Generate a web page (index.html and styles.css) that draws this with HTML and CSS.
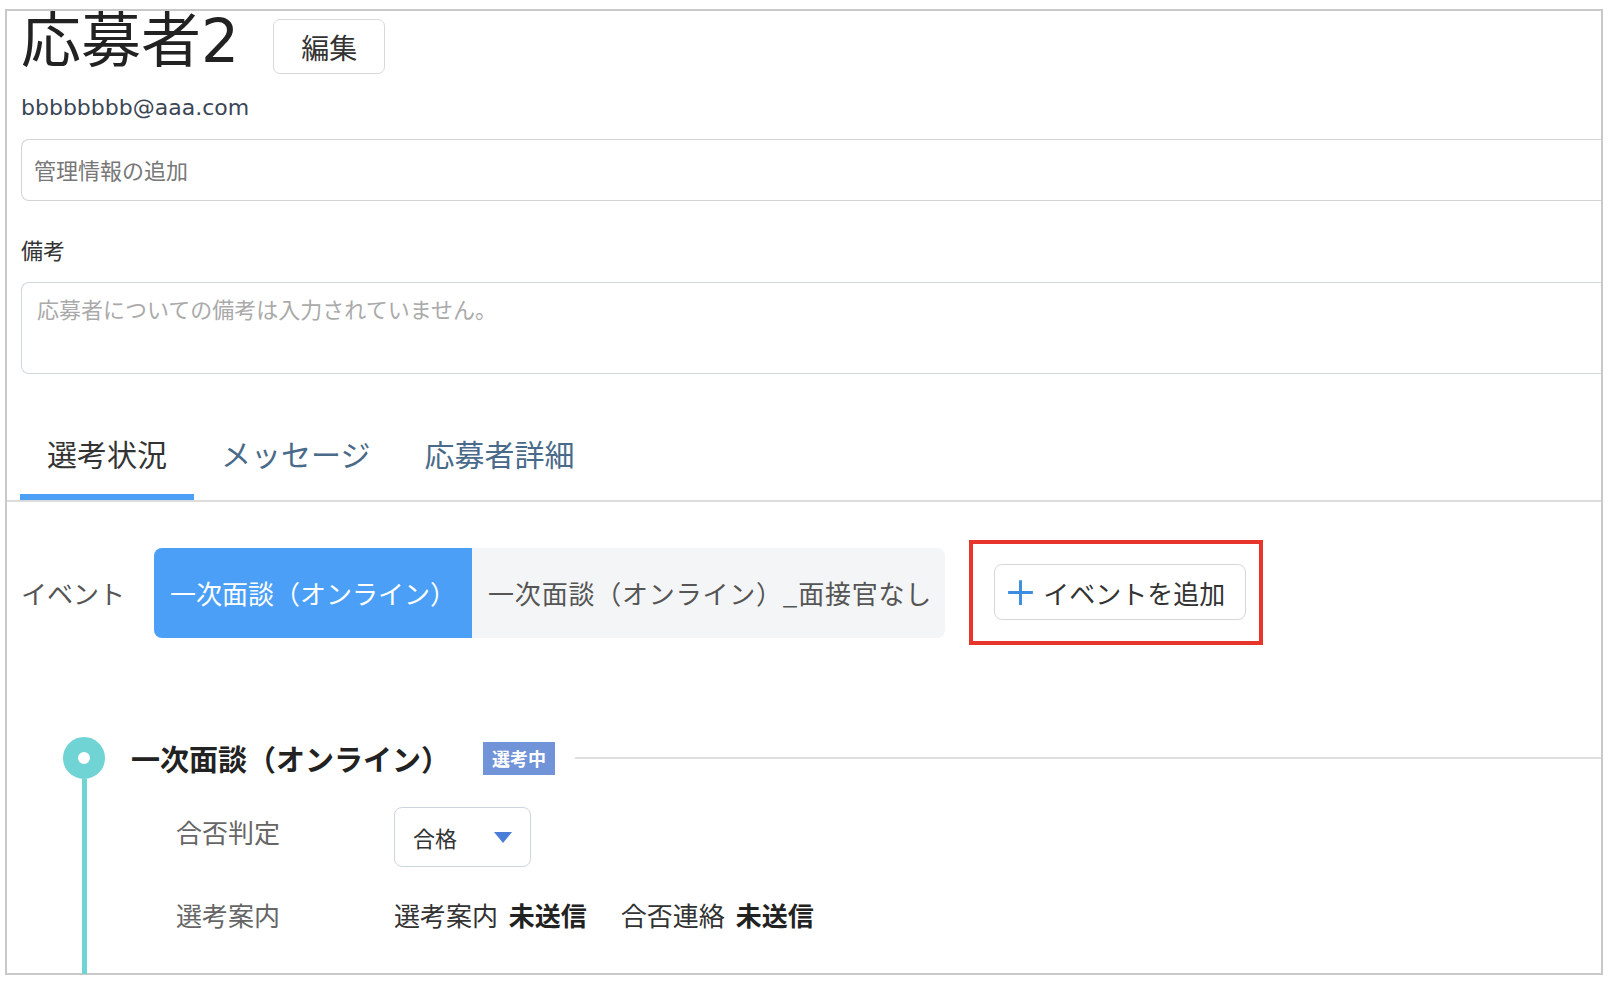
FILE: index.html
```html
<!DOCTYPE html>
<html lang="ja">
<head>
    <meta charset="UTF-8">
    <meta name="viewport" content="width=device-width, initial-scale=1.0">
    <title>応募者2</title>
    <link rel="stylesheet" href="styles.css">
</head>
<body>
    <div class="frame">
        <header class="applicant-head">
            <div class="title-row">
                <h1 class="applicant-name">応募者2</h1>
                <button class="edit-btn">編集</button>
            </div>
            <div class="applicant-mail">bbbbbbbb@aaa.com</div>
            <div class="field field-manage">管理情報の追加</div>
            <div class="field-label">備考</div>
            <div class="field field-note">応募者についての備考は入力されていません。</div>
        </header>

        <nav class="tabs">
            <a class="tab active">選考状況</a>
            <a class="tab">メッセージ</a>
            <a class="tab">応募者詳細</a>
        </nav>

        <section class="events">
            <span class="events-label">イベント</span>
            <div class="segment">
                <span class="segment-item active">一次面談（オンライン）</span>
                <span class="segment-item wide">一次面談（オンライン）_面接官なし</span>
            </div>
            <div class="highlight">
                <button class="add-btn">
                    <svg class="plus" viewBox="0 0 24 24" width="27" height="27">
                        <path d="M12 1v22M1 12h22" stroke="#3b8de2" stroke-width="2.6" fill="none"/>
                    </svg>
                    イベントを追加
                </button>
            </div>
        </section>

        <section class="timeline">
            <div class="rail">
                <span class="dot"></span>
                <span class="rail-line"></span>
            </div>
            <div class="step">
                <div class="step-head">
                    <h2 class="step-title">一次面談（オンライン）</h2>
                    <span class="badge">選考中</span>
                    <span class="step-rule"></span>
                </div>
                <div class="step-row">
                    <span class="step-label raised">合否判定</span>
                    <div class="select">合格<span class="caret"></span></div>
                </div>
                <div class="step-row">
                    <span class="step-label">選考案内</span>
                    <div class="status">選考案内 <b>未送信</b></div>
                    <div class="status">合否連絡 <b>未送信</b></div>
                </div>
            </div>
        </section>
    </div>
</body>
</html>
```

FILE: styles.css
```css
body {
    margin: 0;
    background: #ffffff;
    font-family: "Noto Sans CJK JP", sans-serif;
    color: #333;
}
.frame {
    margin: 9px 0 0 5px;
    width: 1598px;
    height: 966px;
    border: 2px solid #c9c9c9;
    box-sizing: border-box;
}
.applicant-head {
    padding-left: 14px;
}
.title-row {
    display: flex;
    align-items: flex-start;
    gap: 34px;
    height: 60px;
}
.applicant-name {
    margin: 0;
    font-family: "DejaVu Sans", "Noto Sans CJK JP", sans-serif;
    font-size: 60px;
    line-height: 60px;
    font-weight: 400;
    color: #222;
}
.edit-btn {
    margin-top: 8px;
    width: 112px;
    height: 55px;
    border: 1px solid #d9d9d9;
    border-radius: 7px;
    background: #fff;
    font-family: inherit;
    font-size: 28px;
    color: #333;
    padding: 0;
}
.applicant-mail {
    margin-top: 22px;
    font-family: "DejaVu Sans", sans-serif;
    font-size: 22px;
    line-height: 30px;
    color: #3a4656;
}
.field {
    box-sizing: border-box;
    border-radius: 8px 0 0 8px;
    border-right: none !important;
    font-size: 22px;
}
.field-manage {
    margin-top: 16px;
    height: 62px;
    border: 1px solid #d4d4d4;
    padding: 0 12px 2px;
    display: flex;
    align-items: center;
    color: #777;
}
.field-label {
    margin-top: 33px;
    font-size: 22px;
    line-height: 30px;
    color: #333;
}
.field-note {
    margin-top: 18px;
    height: 92px;
    border: 1px solid #cfd7e0;
    padding: 10px 15px;
    line-height: 30px;
    color: #aaa;
}
.tabs {
    margin-top: 44px;
    padding-left: 13px;
    display: flex;
    border-bottom: 2px solid #dcdcdc;
}
.tab {
    padding: 15px 27px 21px;
    font-size: 30px;
    line-height: 40px;
    color: #4a6a8a;
    border-bottom: 6px solid transparent;
}
.tab.active {
    color: #333;
    border-bottom-color: #4b9ff5;
}
.events {
    margin-top: 38px;
    padding-left: 14px;
    display: flex;
    align-items: center;
}
.events-label {
    font-size: 26px;
    color: #555;
    margin-right: 29px;
}
.segment {
    display: flex;
    height: 90px;
    border-radius: 8px;
    overflow: hidden;
    background: #f4f5f7;
}
.segment-item {
    display: flex;
    align-items: center;
    padding: 0 16px;
    font-size: 26px;
    color: #555;
}
.segment-item.wide {
    letter-spacing: 0.8px;
    padding-right: 13px;
}
.segment-item.active {
    background: #4b9ff6;
    color: #fff;
}
.highlight {
    margin-left: 24px;
    border: 4px solid #e8352b;
    padding: 20px 13px 21px 21px;
}
.add-btn {
    display: flex;
    align-items: center;
    gap: 9px;
    height: 56px;
    padding: 0 20px 0 12px;
    border: 1px solid #d6d6d6;
    border-radius: 8px;
    background: #fff;
    font-family: inherit;
    font-size: 26px;
    color: #333;
}
.timeline {
    margin-top: 92px;
    padding-left: 56px;
    display: flex;
    height: 237px;
}
.rail {
    width: 42px;
    display: flex;
    flex-direction: column;
    align-items: center;
}
.dot {
    width: 42px;
    height: 42px;
    box-sizing: border-box;
    border: 15px solid #70d4d5;
    border-radius: 50%;
    background: #fff;
}
.rail-line {
    flex: 1;
    width: 5px;
    background: #70d4d5;
}
.step {
    flex: 1;
    margin-left: 26px;
}
.step-head {
    display: flex;
    align-items: center;
    height: 42px;
}
.step-title {
    margin: 0;
    font-size: 29px;
    line-height: 42px;
    font-weight: 700;
    color: #222;
}
.badge {
    margin-left: 33px;
    height: 33px;
    padding: 0 9px;
    background: #7193d8;
    color: #fff;
    font-size: 18px;
    line-height: 33px;
    font-weight: 700;
}
.step-rule {
    flex: 1;
    height: 2px;
    margin-left: 20px;
    background: #dedede;
}
.step-row {
    margin-top: 28px;
    padding-left: 45px;
    display: flex;
    align-items: center;
    font-size: 26px;
    line-height: 40px;
}
.step-label {
    width: 218px;
    color: #666;
}
.step-label.raised {
    padding-bottom: 10px;
}
.select {
    width: 137px;
    height: 60px;
    box-sizing: border-box;
    border: 1px solid #cdd6e0;
    border-radius: 8px;
    padding: 0 18px;
    display: flex;
    align-items: center;
    justify-content: space-between;
    font-size: 22px;
    color: #333;
}
.caret {
    width: 0;
    height: 0;
    border-left: 9px solid transparent;
    border-right: 9px solid transparent;
    border-top: 11px solid #4a7ed8;
}
.status {
    margin-right: 34px;
    color: #333;
}
.status b {
    margin-left: 5px;
    color: #222;
}
```
